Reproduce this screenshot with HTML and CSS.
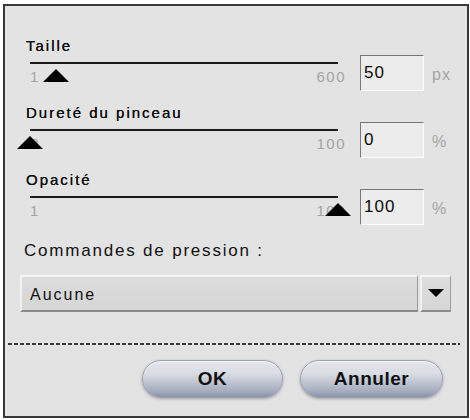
FILE: index.html
```html
<!DOCTYPE html>
<html lang="fr">
<head>
<meta charset="utf-8">
<title>Pinceau</title>
<link rel="stylesheet" href="styles.css">
</head>
<body>
<div class="dialog">
  <div class="params">
    <div class="row">
      <div class="slider">
        <div class="slider-label">Taille</div>
        <div class="track">
          <span class="thumb" style="left: 8.3%"><svg width="26" height="13" viewBox="0 0 26 13"><polygon points="13,0 26,13 0,13" fill="#000"/></svg></span>
        </div>
        <div class="scale"><span>1</span><span>600</span></div>
      </div>
      <input class="field" type="text" value="50">
      <span class="unit">px</span>
    </div>
    <div class="row">
      <div class="slider">
        <div class="slider-label">Dureté du pinceau</div>
        <div class="track">
          <span class="thumb" style="left: 0%"><svg width="26" height="13" viewBox="0 0 26 13"><polygon points="13,0 26,13 0,13" fill="#000"/></svg></span>
        </div>
        <div class="scale"><span>0</span><span>100</span></div>
      </div>
      <input class="field" type="text" value="0">
      <span class="unit">%</span>
    </div>
    <div class="row">
      <div class="slider">
        <div class="slider-label">Opacité</div>
        <div class="track">
          <span class="thumb" style="left: 100%"><svg width="26" height="13" viewBox="0 0 26 13"><polygon points="13,0 26,13 0,13" fill="#000"/></svg></span>
        </div>
        <div class="scale"><span>1</span><span>100</span></div>
      </div>
      <input class="field" type="text" value="100">
      <span class="unit">%</span>
    </div>
  </div>

  <div class="pressure-label">Commandes de pression :</div>
  <div class="select">
    <div class="select-value">Aucune</div>
    <div class="select-btn"><svg width="16" height="8" viewBox="0 0 16 8"><polygon points="0,0 16,0 8,8" fill="#000"/></svg></div>
  </div>

  <div class="separator"></div>

  <div class="buttons">
    <button class="btn btn-ok" type="button">OK</button>
    <button class="btn btn-cancel" type="button">Annuler</button>
  </div>
</div>
</body>
</html>
```

FILE: styles.css
```css
html, body {
  margin: 0;
  padding: 0;
  background: #ffffff;
}

body {
  font-family: "Liberation Sans", Arial, sans-serif;
  color: #111111;
}

.dialog {
  box-sizing: border-box;
  margin: 4px 0 0 3px;
  width: 466px;
  height: 414px;
  border: 2px solid #383838;
  background: #e3e3e3;
  padding: 31px 7px 0 3px;
}

.params {
  margin-left: 18px;
  display: flex;
  flex-direction: column;
  gap: 13px;
}

.row {
  display: flex;
  align-items: flex-start;
}

.slider {
  width: 320px;
}

.slider-label {
  font-size: 15px;
  line-height: 18px;
  letter-spacing: 2px;
  color: #0d0d0d;
  height: 18px;
  white-space: nowrap;
  text-shadow: 0 0 0.15px #111111;
}

.track {
  position: relative;
  margin: 7px 8px 0 4px;
  height: 2px;
  background: #1a1a1a;
}

.thumb {
  position: absolute;
  top: 7px;
  margin-left: -13px;
  width: 26px;
  height: 13px;
  z-index: 2;
  line-height: 0;
}

.thumb svg {
  display: block;
}

.scale {
  display: flex;
  justify-content: space-between;
  margin-top: 5px;
  padding-left: 4px;
  font-size: 15px;
  line-height: 16px;
  letter-spacing: 1.5px;
  color: #a4a4a4;
}

.field {
  box-sizing: border-box;
  margin: 18px 0 0 14px;
  width: 64px;
  height: 36px;
  padding: 0 0 0 3px;
  border: 1px solid;
  border-color: #777777 #ffffff #ffffff #777777;
  background: #ececec;
  font-family: "Liberation Sans", Arial, sans-serif;
  font-size: 17px;
  letter-spacing: 1px;
  color: #0a0a0a;
  outline: none;
}

.unit {
  margin: 29px 0 0 8px;
  font-size: 16px;
  line-height: 18px;
  letter-spacing: 1px;
  color: #a4a4a4;
}

.pressure-label {
  margin: 16px 0 0 16px;
  font-size: 17px;
  line-height: 20px;
  letter-spacing: 1.8px;
  color: #111111;
}

.select {
  display: flex;
  margin: 14px 0 0 12px;
  width: 431px;
  height: 37px;
  gap: 2px;
}

.select-value {
  box-sizing: border-box;
  flex: 1;
  height: 37px;
  padding: 9px 0 0 8px;
  background: linear-gradient(#dcdcdc, #d6d6d6);
  border-top: 2px solid #f6f6f6;
  border-left: 2px solid #f2f2f2;
  border-bottom: 2px solid #8c8c8c;
  border-right: 1px solid #9c9c9c;
  font-size: 16px;
  line-height: 18px;
  letter-spacing: 2px;
  color: #111111;
}

.select-btn {
  box-sizing: border-box;
  width: 31px;
  height: 37px;
  display: flex;
  align-items: center;
  justify-content: center;
  background: linear-gradient(#dedede, #d6d6d6);
  border-top: 2px solid #f6f6f6;
  border-left: 2px solid #f2f2f2;
  border-bottom: 2px solid #8c8c8c;
  border-right: 1px solid #9c9c9c;
}

.select-btn svg {
  display: block;
  margin-top: -1px;
}

.separator {
  margin-top: 31px;
  height: 2px;
  background: repeating-linear-gradient(to right, #3a3a3a 0 4px, transparent 4px 6px);
}

.buttons {
  display: flex;
  justify-content: flex-end;
  gap: 17px;
  margin-top: 15px;
  padding-right: 17px;
}

.btn {
  box-sizing: border-box;
  height: 38px;
  border: 1px solid #9aa2b2;
  border-radius: 19px;
  background: linear-gradient(#e4e6eb 0%, #d9dce3 35%, #bcc2cf 62%, #a3abbd 85%, #8a93a8 100%);
  box-shadow: 0 1px 3px rgba(0, 0, 0, 0.3), inset 0 1px 0 rgba(255, 255, 255, 0.7);
  font-family: "Liberation Sans", Arial, sans-serif;
  font-weight: bold;
  font-size: 19px;
  letter-spacing: 0.5px;
  color: #111111;
  padding: 0;
}

.btn-ok {
  width: 141px;
}

.btn-cancel {
  width: 143px;
}
```
